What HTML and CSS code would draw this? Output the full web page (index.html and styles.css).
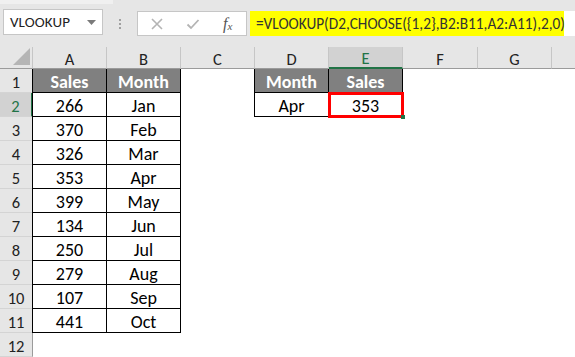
FILE: index.html
```html
<!DOCTYPE html>
<html>
<head>
<meta charset="utf-8">
<link rel="stylesheet" href="styles.css">
</head>
<body>
<div class="app">
  <div class="toolbar">
    <div class="topstrip"></div>
    <div class="bar">
      <div class="namebox">
        <span class="name">VLOOKUP</span>
        <svg class="caret" width="9" height="5" viewBox="0 0 9 5"><polygon points="0,0 9,0 4.5,5" fill="#7a7a7a"/></svg>
      </div>
      <div class="dots"><i></i><i></i><i></i></div>
      <div class="fxbox">
        <svg class="ic" width="14" height="14" viewBox="0 0 14 14"><path d="M2 2 L12 12 M12 2 L2 12" stroke="#b4b4b4" stroke-width="1.6" fill="none"/></svg>
        <svg class="ic" width="14" height="14" viewBox="0 0 14 14"><path d="M1.5 7.5 L5 11 L12.5 3" stroke="#b4b4b4" stroke-width="1.8" fill="none"/></svg>
        <span class="fx">f<sub>x</sub></span>
      </div>
      <div class="formula"><span class="hl">=VLOOKUP(D2,CHOOSE({1,2},B2:B11,A2:A11),2,0)</span></div>
    </div>
  </div>
  <div class="sheet">
    <div class="corner"><svg width="17" height="17" viewBox="0 0 17 17"><polygon points="17,0 17,17 0,17" fill="#b5b5b5"/></svg></div>
    <div class="ch">A</div><div class="ch">B</div><div class="ch">C</div><div class="ch">D</div><div class="ch sel">E</div><div class="ch">F</div><div class="ch">G</div><div class="ch last"></div>

    <div class="rh">1</div><div class="c th first">Sales</div><div class="c th">Month</div><div class="c"></div><div class="c th first">Month</div><div class="c th">Sales</div><div class="c"></div><div class="c"></div><div class="c"></div>
    <div class="rh rsel">2</div><div class="c td first">266</div><div class="c td">Jan</div><div class="c"></div><div class="c td first">Apr</div><div class="c td active">353</div><div class="c"></div><div class="c"></div><div class="c"></div>
    <div class="rh">3</div><div class="c td first">370</div><div class="c td">Feb</div><div class="c"></div><div class="c"></div><div class="c"></div><div class="c"></div><div class="c"></div><div class="c"></div>
    <div class="rh">4</div><div class="c td first">326</div><div class="c td">Mar</div><div class="c"></div><div class="c"></div><div class="c"></div><div class="c"></div><div class="c"></div><div class="c"></div>
    <div class="rh">5</div><div class="c td first">353</div><div class="c td">Apr</div><div class="c"></div><div class="c"></div><div class="c"></div><div class="c"></div><div class="c"></div><div class="c"></div>
    <div class="rh">6</div><div class="c td first">399</div><div class="c td">May</div><div class="c"></div><div class="c"></div><div class="c"></div><div class="c"></div><div class="c"></div><div class="c"></div>
    <div class="rh">7</div><div class="c td first">134</div><div class="c td">Jun</div><div class="c"></div><div class="c"></div><div class="c"></div><div class="c"></div><div class="c"></div><div class="c"></div>
    <div class="rh">8</div><div class="c td first">250</div><div class="c td">Jul</div><div class="c"></div><div class="c"></div><div class="c"></div><div class="c"></div><div class="c"></div><div class="c"></div>
    <div class="rh">9</div><div class="c td first">279</div><div class="c td">Aug</div><div class="c"></div><div class="c"></div><div class="c"></div><div class="c"></div><div class="c"></div><div class="c"></div>
    <div class="rh">10</div><div class="c td first">107</div><div class="c td">Sep</div><div class="c"></div><div class="c"></div><div class="c"></div><div class="c"></div><div class="c"></div><div class="c"></div>
    <div class="rh">11</div><div class="c td first">441</div><div class="c td">Oct</div><div class="c"></div><div class="c"></div><div class="c"></div><div class="c"></div><div class="c"></div><div class="c"></div>
    <div class="rh">12</div><div class="c"></div><div class="c"></div><div class="c"></div><div class="c"></div><div class="c"></div><div class="c"></div><div class="c"></div><div class="c"></div>
  </div>
</div>
</body>
</html>
```

FILE: styles.css
```css
* { box-sizing: border-box; }
html, body { margin: 0; padding: 0; background: #fff; }
body { width: 575px; height: 357px; overflow: hidden; font-family: "Carlito", "Lato", "Open Sans", sans-serif; color: #000; }

.toolbar { height: 47px; background: #e6e6e6; position: relative; }
.topstrip { height: 4px; width: 113px; background: #f0f0f0; }
.bar { display: flex; align-items: flex-start; padding-top: 5px; }
.namebox { margin-left: 3px; width: 100px; height: 26px; background: #fff; border: 1px solid #c6c6c6; display: flex; align-items: center; justify-content: space-between; padding: 0 6px 0 6px; }
.name { font-size: 15px; color: #222; letter-spacing: 0.1px; }
.caret { margin-top: 1px; }
.dots { width: 34px; display: flex; flex-direction: column; align-items: center; gap: 2px; padding-top: 10px; }
.dots i { display: block; width: 2px; height: 2px; background: #a0a0a0; }
.fxbox { margin-top: 2px; width: 110px; height: 25px; background: #fff; border: 1px solid #c6c6c6; display: flex; align-items: center; padding-left: 12px; gap: 22px; }
.fx { font-family: "Liberation Serif", serif; font-style: italic; font-size: 16px; color: #555; margin-left: 1px; line-height: 1; }
.fx sub { font-size: 11px; vertical-align: -1px; }
.formula { margin-top: 2px; margin-left: 3px; flex: 1; height: 25px; background: #fff; display: flex; }
.hl { background: #ffff00; height: 25px; width: 314px; font-size: 15.3px; color: #333; padding-left: 6px; line-height: 25px; white-space: nowrap; }

.sheet { display: grid; grid-template-columns: 33px 74px 74px 74px 74px 74px 75px 74px 1fr; grid-template-rows: 22px repeat(12, 24px); }
.corner { background: #e6e6e6; border-right: 1px solid #c6c6c6; border-bottom: 1px solid #9b9b9b; display: flex; align-items: flex-end; justify-content: flex-end; padding: 0 2px 3px 0; }
.ch { background: #e6e6e6; border-right: 1px solid #c6c6c6; border-bottom: 1px solid #9b9b9b; font-size: 16.5px; color: #222; display: flex; align-items: center; justify-content: center; padding-top: 2px; }
.ch.last { border-right: none; }
.ch.sel { background: #d2d2d2; color: #217346; border-bottom: 2px solid #217346; }
.rh { background: #e6e6e6; border-right: 1px solid #9b9b9b; border-bottom: 1px solid #d4d4d4; font-size: 16.5px; color: #222; display: flex; align-items: center; justify-content: center; padding-top: 2px; }
.rh.rsel { background: #d2d2d2; color: #217346; border-right: 2px solid #217346; }

.c { font-size: 18px; display: flex; align-items: center; justify-content: center; padding-top: 3px; position: relative; }
.th { background: #808080; color: #fff; font-weight: bold; border-right: 1px solid #000; border-bottom: 1px solid #000; }
.td { border-right: 1px solid #000; border-bottom: 1px solid #000; }
.first { border-left: 1px solid #000; margin-left: -1px; }
.active::after { content: ""; position: absolute; left: -1px; top: -1px; right: -2px; bottom: -2px; border: 3px solid #ff0000; }
.active::before { content: ""; position: absolute; right: -3px; bottom: -3px; width: 4px; height: 4px; background: #217346; z-index: 2; }
```
